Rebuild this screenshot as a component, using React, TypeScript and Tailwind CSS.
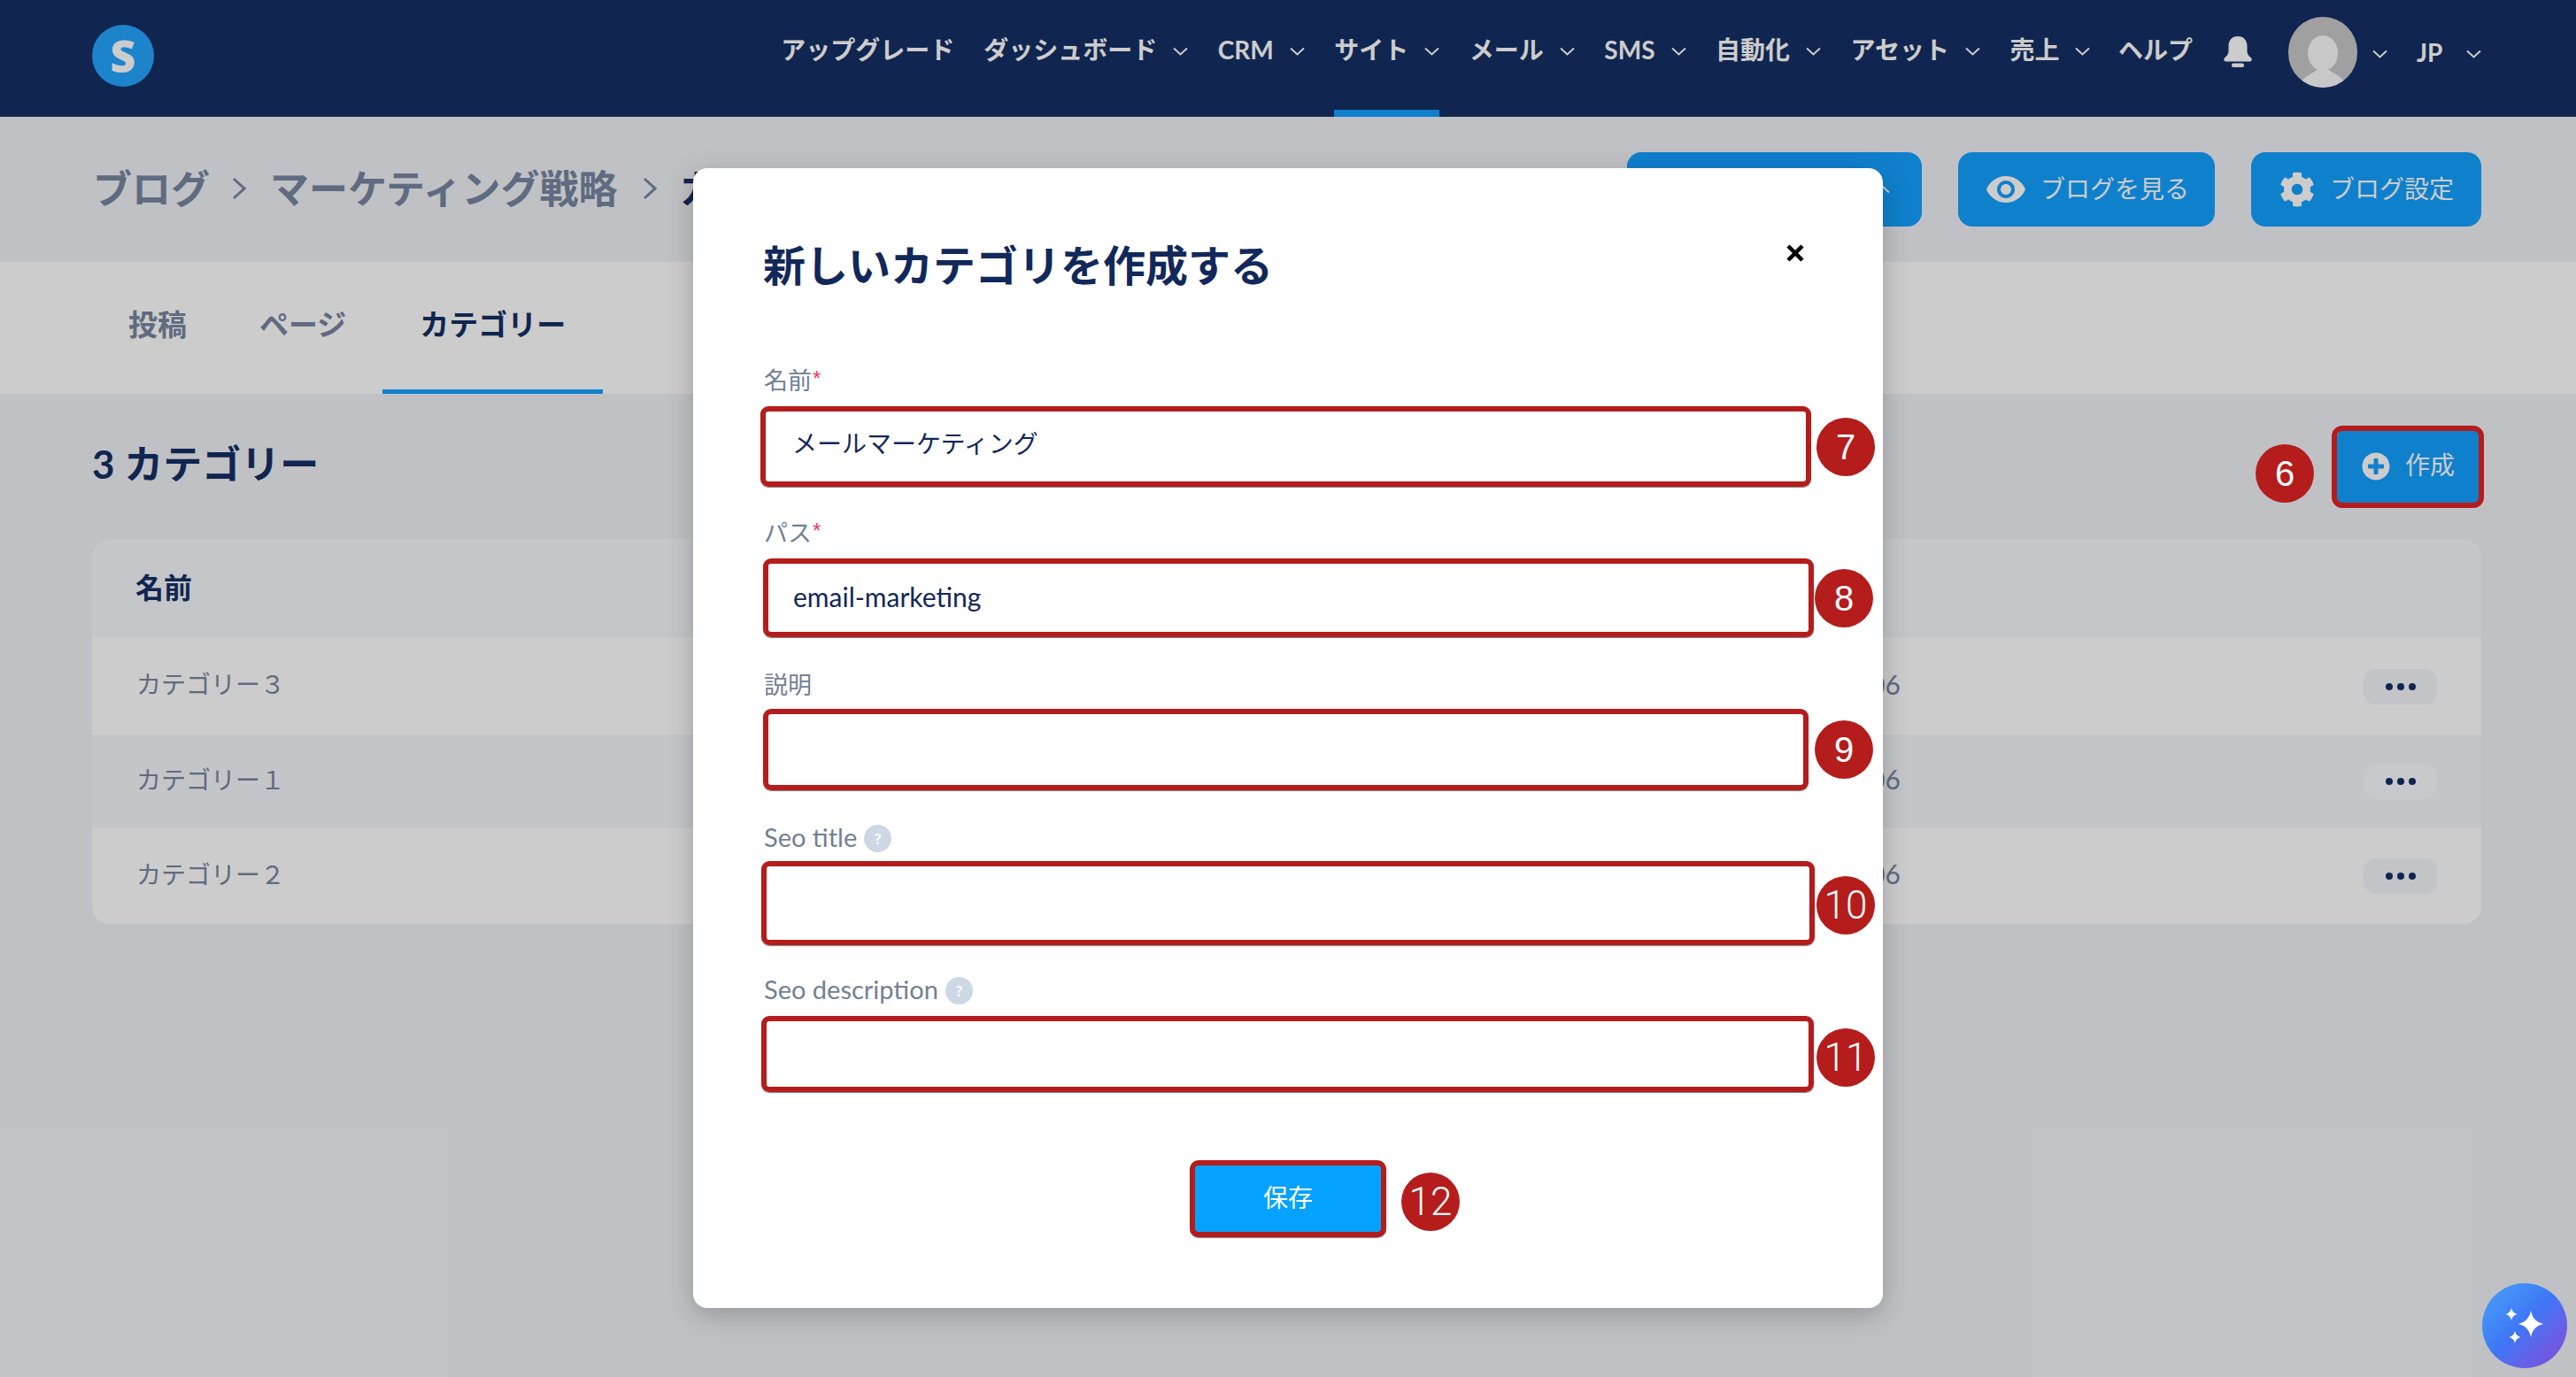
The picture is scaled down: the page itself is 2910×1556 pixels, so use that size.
import { FaCog, FaPlusCircle } from "react-icons/fa";
import { MdVisibility } from "react-icons/md";

const NAV = [
  { label: "アップグレード", itemClass: "mr-[33px]" },
  { label: "ダッシュボード", caret: true, itemClass: "mr-[33.5px]" },
  { label: "CRM", caret: true, itemClass: "mr-[33.5px]" },
  { label: "サイト", caret: true, active: true, itemClass: "mr-[33.5px]" },
  { label: "メール", caret: true, itemClass: "mr-[33.5px]" },
  { label: "SMS", caret: true, itemClass: "mr-[33.5px]" },
  { label: "自動化", caret: true, itemClass: "mr-[33.5px]" },
  { label: "アセット", caret: true, itemClass: "mr-[33.5px]" },
  { label: "売上", caret: true, itemClass: "mr-[31.5px]" },
  { label: "ヘルプ", itemClass: "mr-[33px]" },
];

const ROWS = [
  { name: "カテゴリー３", rowClass: "h-[109px] bg-white", btnClass: "bg-[#f3f6fb]" },
  { name: "カテゴリー１", rowClass: "h-[106px] bg-[#f6f7fb]", btnClass: "bg-[#fbfcff]" },
  { name: "カテゴリー２", rowClass: "h-[108px] bg-white", btnClass: "bg-[#f3f6fb]" },
];

const FIELDS = [
  {
    label: "名前",
    required: true,
    value: "メールマーケティング",
    badge: "7",
    labelClass: "mt-[82px] text-[27px]",
    rowClass: "mt-[11px] ml-[-1px]",
    boxClass: "w-[1187px] h-[91px] pl-[30px] pb-[10px] text-[28px]",
    badgeClass: "ml-[6px]",
  },
  {
    label: "パス",
    required: true,
    value: "email-marketing",
    badge: "8",
    labelClass: "mt-[35px] pb-[2px] text-[27px]",
    rowClass: "mt-[10px] ml-[2px]",
    boxClass: "w-[1187px] h-[89px] pl-[28px] pb-[3px] text-[30px]",
    badgeClass: "ml-[1px]",
  },
  {
    label: "説明",
    value: "",
    badge: "9",
    labelClass: "mt-[37px] pb-[2px] text-[27px]",
    rowClass: "mt-[8px] ml-[2px]",
    boxClass: "w-[1181px] h-[92px] text-[27px]",
    badgeClass: "ml-[7px]",
  },
  {
    label: "Seo title",
    help: true,
    value: "",
    badge: "10",
    labelClass: "mt-[35px] text-[29px]",
    rowClass: "mt-[9px]",
    boxClass: "w-[1190px] h-[95px] text-[27px]",
    badgeClass: "ml-[2px] mt-[4px]",
  },
  {
    label: "Seo description",
    help: true,
    value: "",
    badge: "11",
    labelClass: "mt-[32px] text-[29px]",
    rowClass: "mt-[12px]",
    boxClass: "w-[1189px] h-[86px] text-[27px]",
    badgeClass: "ml-[3px] mt-[8px]",
  },
];

function Caret() {
  return (
    <svg width="17" height="10" viewBox="0 0 17 10" fill="none" className="mt-[4px] shrink-0">
      <path d="M1 1.5 8.5 8.5 16 1.5" stroke="white" strokeWidth="2" />
    </svg>
  );
}

function Crumb() {
  return (
    <svg width="16" height="26" viewBox="0 0 16 26" fill="none" className="shrink-0">
      <path d="M2 2 14 13 2 24" stroke="#7786a0" strokeWidth="3" />
    </svg>
  );
}

function Badge({ n, thin }: { n: string; thin?: boolean }) {
  return (
    <div
      className={
        thin
          ? "w-[66px] h-[66px] shrink-0 rounded-full bg-[#b51c1c] text-white flex items-center justify-center text-[44px] font-light font-['Roboto',sans-serif]"
          : "w-[66px] h-[66px] shrink-0 rounded-full bg-[#b51c1c] text-white flex items-center justify-center text-[40px] font-['Liberation_Sans',sans-serif]"
      }
    >
      {n}
    </div>
  );
}

function Header() {
  return (
    <header className="h-[132px] bg-[#152f64] flex justify-between pl-[104px] pr-[107px]">
      <div className="w-[70px] h-[70px] mt-[28px] rounded-full bg-[#25a6ff] flex items-center justify-center text-white text-[50px] font-extrabold font-['Open_Sans',sans-serif]">
        S
      </div>
      <nav className="flex items-stretch text-white text-[28px] font-bold">
        {NAV.map((item) => (
          <div key={item.label} className={`relative flex items-center gap-[18px] pb-[20px] ${item.itemClass}`}>
            <span>{item.label}</span>
            {item.caret && <Caret />}
            {item.active && <div className="absolute left-0 right-0 bottom-0 h-[8px] bg-[#13a0ff]" />}
          </div>
        ))}
        <div className="flex items-center pb-[16px] ml-[2px]">
          <svg width="32" height="35" viewBox="0 0 32 35" fill="white">
            <path d="M16 0c6.800 0 10.500 4.800 10.500 11v6c0 3.500 2.500 5.500 4.500 7.500 1.500 1.500.7 4-1.500 4h-27C.3 28.500-.5 26 1 24.500c2-2 4.500-4 4.500-7.500v-6C5.500 4.800 9.200 0 16 0Z" />
            <rect x="9" y="30.500" width="14" height="4.500" rx="2" />
          </svg>
        </div>
        <div className="flex items-center gap-[17px] ml-[41px] pb-[14px]">
          <div className="relative w-[78px] h-[80px] rounded-full bg-[#c8c8c8] overflow-hidden">
            <svg width="78" height="80" viewBox="0 0 78 80" className="absolute inset-0">
              <ellipse cx="39" cy="41" rx="17" ry="20" fill="#fafafa" />
              <path d="M14 74c5-8 14-10 18-14h14c4 4 13 6 18 14-7 5-16 6-25 6s-18-1-25-6Z" fill="#fafafa" />
            </svg>
          </div>
          <Caret />
          <span className="ml-[16px] w-[31px]">JP</span>
          <span className="ml-[8px]">
            <Caret />
          </span>
        </div>
      </nav>
    </header>
  );
}

function PageContent() {
  return (
    <>
      <div className="h-[164px] flex items-center justify-between pl-[105px] pr-[107px]">
        <div className="flex items-center pb-[3px] text-[44px] font-bold text-[#7786a0]">
          <span>ブログ</span>
          <span className="ml-[25px] mr-[27px]">
            <Crumb />
          </span>
          <span>マーケティング戦略</span>
          <span className="ml-[29px] mr-[25px]">
            <Crumb />
          </span>
          <span className="text-[#152f64]">カテゴリー</span>
        </div>
        <div className="flex gap-[41px] text-[28px] text-white">
          <button className="w-[333px] h-[84px] rounded-[16px] bg-[#13a0ff] flex items-center justify-end pr-[36px]">
            <svg width="17" height="10" viewBox="0 0 17 10" fill="none">
              <path d="M1 8.500 8.500 1.500 16 8.500" stroke="white" strokeWidth="2" />
            </svg>
          </button>
          <button className="w-[290px] h-[84px] rounded-[16px] bg-[#13a0ff] flex items-center gap-[15px] pl-[30px]">
            <MdVisibility size={48} />
            <span className="pb-[3px]">ブログを見る</span>
          </button>
          <button className="w-[260px] h-[84px] rounded-[16px] bg-[#13a0ff] flex items-center gap-[17px] pl-[32px]">
            <FaCog size={40} />
            <span className="pb-[3px]">ブログ設定</span>
          </button>
        </div>
      </div>

      <div className="h-[149px] bg-white flex items-stretch pl-[104px] text-[33px] font-bold">
        <div className="px-[41px] flex items-center pb-[8px] text-[#7786a0]">投稿</div>
        <div className="px-[41px] flex items-center pb-[8px] text-[#7786a0]">ページ</div>
        <div className="px-[42px] flex items-center pb-[3px] text-[#152f64] border-b-[5px] border-[#13a0ff]">カテゴリー</div>
      </div>

      <div className="px-[107px] pl-[104px] pt-[41px] pb-[39px] flex items-start justify-between">
        <h2 className="mt-[8px] text-[44px] leading-[60px] font-bold text-[#152f64]">3 カテゴリー</h2>
        <div className="flex items-start gap-[26px]">
          <div className="relative z-20 mt-[16px]">
            <Badge n="6" />
          </div>
          <div>
            <button className="w-[163px] h-[84px] rounded-[8px] bg-[#13a0ff] text-white text-[28px] flex items-center gap-[17px] pl-[28px]">
              <FaPlusCircle size={32} className="-mt-[2px]" />
              <span className="-mt-[7px]">作成</span>
            </button>
            {/* annotation ring sits above the dim layer */}
            <div className="absolute z-20 left-[2634px] top-[481px] w-[172px] h-[93px] rounded-[12px] border-[6px] border-[#b51c1c]" />
          </div>
        </div>
      </div>

      <div className="ml-[104px] mr-[107px] rounded-[20px] overflow-hidden">
        <div className="h-[112px] bg-[#f6f8fc] flex items-center pl-[49px] pb-[3px] text-[32px] font-bold text-[#152f64]">名前</div>
        {ROWS.map((row) => (
          <div key={row.name} className={`flex items-center pl-[50px] pr-[50px] text-[28px] text-[#7786a0] ${row.rowClass}`}>
            <div className="w-[1993px] flex justify-between items-center pb-[5px]">
              <span>{row.name}</span>
              <span className="text-[30px]">06</span>
            </div>
            <button className={`ml-auto w-[83px] h-[40px] rounded-[14px] flex items-center justify-center gap-[5px] ${row.btnClass}`}>
              <span className="w-[8px] h-[8px] rounded-full bg-[#152f64]" />
              <span className="w-[8px] h-[8px] rounded-full bg-[#152f64]" />
              <span className="w-[8px] h-[8px] rounded-full bg-[#152f64]" />
            </button>
          </div>
        ))}
      </div>
    </>
  );
}

function HelpDot() {
  return (
    <span className="w-[31px] h-[31px] mt-[3px] rounded-full bg-[#cdd8e4] text-white text-[17px] font-bold flex items-center justify-center">
      ?
    </span>
  );
}

function Modal() {
  return (
    <div className="absolute inset-0 z-30 flex justify-center items-start pt-[190px]">
      <div className="w-[1344px] h-[1288px] bg-white rounded-[16px] shadow-[0_8px_30px_rgba(0,0,0,0.22)] pl-[77px] pt-[80px]">
        <div className="flex items-center justify-between pr-[89px]">
          <h1 className="ml-[2px] text-[48px] leading-[60px] font-bold text-[#12285a]">新しいカテゴリを作成する</h1>
          <svg width="20" height="20" viewBox="0 0 20 20" className="-mt-[28px]">
            <path d="M2 2 18 18M18 2 2 18" stroke="black" strokeWidth="4.500" />
          </svg>
        </div>

        {FIELDS.map((field) => (
          <div key={field.label}>
            <div className={`flex items-center gap-[8px] ml-[3px] h-[36px] text-[#718096] ${field.labelClass}`}>
              <span>{field.label}</span>
              {field.required && <span className="-ml-[7px] -mt-[4px] text-[24px] text-[#f0386a] font-['Liberation_Sans',sans-serif]">*</span>}
              {field.help && <HelpDot />}
            </div>
            <div className={`flex items-center ${field.rowClass}`}>
              <input
                readOnly
                value={field.value}
                className={`block rounded-[9px] border-[6px] border-[#b51c1c] text-[#12285a] outline-none shadow-[0_1px_1px_#777] ${field.boxClass}`}
              />
              <div className={field.badgeClass}>
                <Badge n={field.badge} thin={field.badge.length > 1} />
              </div>
            </div>
          </div>
        ))}

        <div className="mt-[77px] -ml-[77px] flex justify-center">
          <div className="relative">
            <button className="w-[222px] h-[87px] rounded-[10px] border-[6px] border-[#b51c1c] bg-[#05a2ff] pb-[3px] text-white text-[28px] shadow-[0_1px_1px_#777]">
              保存
            </button>
            <div className="absolute left-[239px] top-[14px]">
              <Badge n="12" thin />
            </div>
          </div>
        </div>
      </div>
    </div>
  );
}

function SparkleButton() {
  return (
    <div className="absolute z-40 right-[10px] bottom-[10px] w-[96px] h-[96px] rounded-full bg-gradient-to-br from-[#4aa3f7] via-[#3f74f5] to-[#7f46d6]">
      <svg width="96" height="96" viewBox="0 0 96 96" fill="white">
        <path d="M55 31c1.500 8 6 13 14 15-8 2-12.500 7-14 15-1.500-8-6-13-14-15 8-2 12.500-7 14-15Z" />
        <path d="M33 28c.6 3.600 2.900 6 6.500 7-3.600 1-5.900 3.400-6.500 7-.6-3.600-2.900-6-6.500-7 3.600-1 5.900-3.400 6.500-7Z" />
        <path d="M37 54c.6 3.600 2.900 6 6.500 7-3.600 1-5.900 3.400-6.500 7-.6-3.600-2.900-6-6.500-7 3.600-1 5.900-3.400 6.500-7Z" />
      </svg>
    </div>
  );
}

export default function App() {
  return (
    <div className="relative w-[2910px] h-[1556px] overflow-hidden bg-[#f0f2f7] font-['Lato','Noto_Sans_CJK_JP',sans-serif]">
      <Header />
      <PageContent />
      <div className="absolute inset-0 z-10 bg-black/20" />
      <Modal />
      <SparkleButton />
    </div>
  );
}
